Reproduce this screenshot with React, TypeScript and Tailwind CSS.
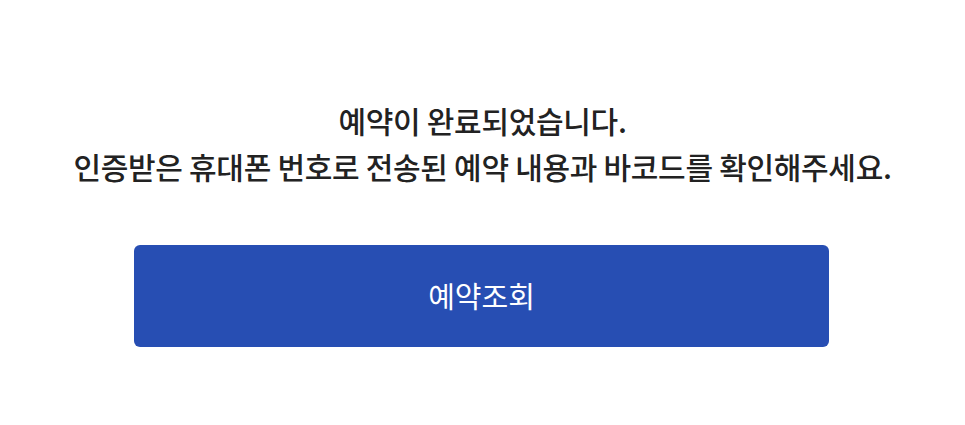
export default function App() {
  return (
    <div
      className="min-h-[425px] bg-white pt-[97px]"
      style={{ fontFamily: '"Noto Sans CJK KR", "Noto Sans", sans-serif' }}
    >
      <div className="text-center text-[30px] font-medium leading-[46px] tracking-[-0.01em] text-[#222222]">
        <p>예약이 완료되었습니다.</p>
        <p>인증받은 휴대폰 번호로 전송된 예약 내용과 바코드를 확인해주세요.</p>
      </div>
      <div className="mt-[56px] flex justify-center pr-[2px]">
        <button className="flex h-[102px] w-[695px] items-center justify-center rounded-[6px] bg-[#274eb3] text-[29px] text-white">
          예약조회
        </button>
      </div>
    </div>
  );
}
